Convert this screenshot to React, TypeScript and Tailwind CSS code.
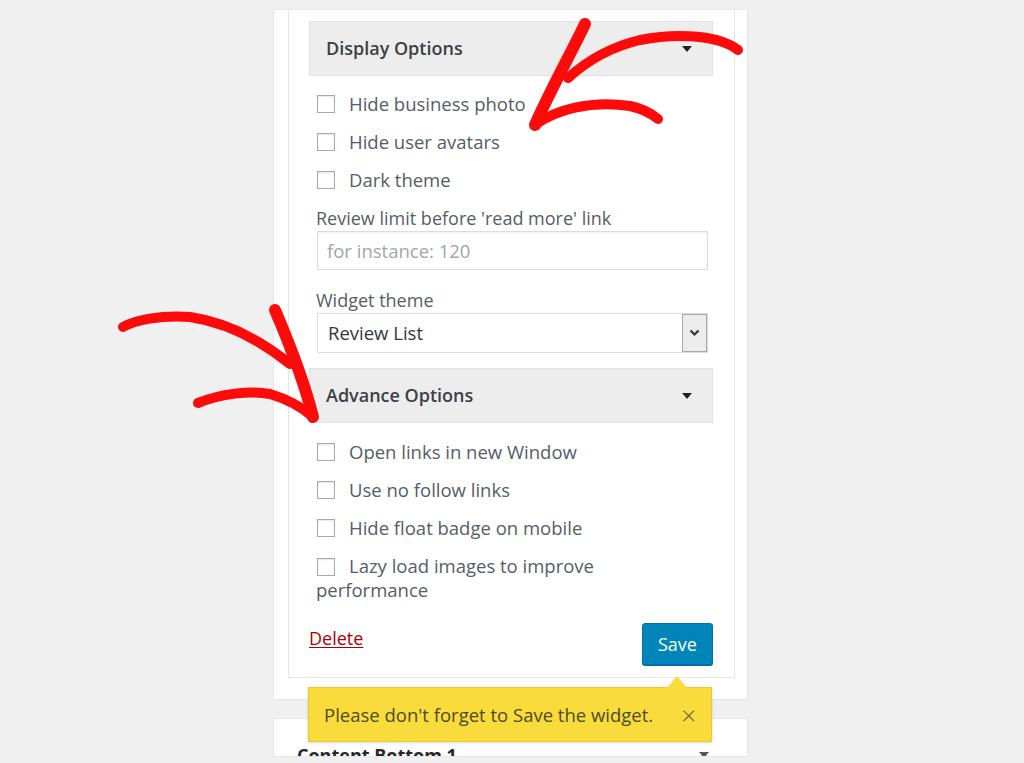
import React from "react";

function Checkbox() {
  return (
    <span className="inline-block w-[18px] h-[18px] shrink-0 border border-[#a7aaad] bg-white shadow-[inset_0_1px_2px_rgba(0,0,0,0.1)]" />
  );
}

function CheckRow({ label }: { label: string }) {
  return (
    <div className="h-[38px] flex items-center pl-[8px] gap-[14px]">
      <Checkbox />
      <span className="text-[18.5px] text-[#555d66] leading-[24px]">{label}</span>
    </div>
  );
}

function SectionHeader({ title }: { title: string }) {
  return (
    <div className="h-[55px] flex items-center justify-between bg-[#ededed] border border-[#e2e2e2] pl-[16px] pr-[20px]">
      <span className="text-[18px] font-semibold text-[#3c4045]">{title}</span>
      <span className="w-0 h-0 border-l-[5px] border-r-[5px] border-t-[6px] border-l-transparent border-r-transparent border-t-[#222]" />
    </div>
  );
}

export default function App() {
  return (
    <div className="relative w-[1024px] h-[763px] bg-[#f0f0f0] overflow-hidden font-['Open_Sans',sans-serif]">
      <div className="flex flex-col pl-[273px] pt-[9px]">
        {/* Outer panel */}
        <div className="w-[475px] bg-white border border-[#e6e6e6] pl-[14px] pr-[12px] pb-[21px]">
          <div className="border-x border-b border-[#e5e5e5] pl-[20px] pr-[21px] pt-[11px] pb-[12px]">
            <SectionHeader title="Display Options" />
            <div className="mt-[9px]">
              <CheckRow label="Hide business photo" />
              <CheckRow label="Hide user avatars" />
              <CheckRow label="Dark theme" />
            </div>
            <div className="mt-[8px] pl-[7px] h-[22px] leading-[22px] text-[18px] text-[#555d66]">
              Review limit before 'read more' link
            </div>
            <div className="mt-[2px] ml-[8px] mr-[5px] h-[39px] border border-[#dcdcdc] shadow-[inset_0_1px_2px_rgba(0,0,0,0.07)] flex items-center pl-[9px] text-[18.5px] text-[#a0a5aa]">
              for instance: 120
            </div>
            <div className="mt-[19px] pl-[7px] h-[22px] leading-[22px] text-[18px] text-[#555d66]">
              Widget theme
            </div>
            <div className="mt-[2px] ml-[8px] mr-[5px] h-[40px] border border-[#dcdcdc] flex items-stretch">
              <div className="flex-1 flex items-center pl-[10px] text-[18.5px] text-[#32373c]">Review List</div>
              <div className="w-[25px] border border-[#a9a9a9] bg-[#ececec] flex items-center justify-center">
                <svg width="11" height="8" viewBox="0 0 11 8">
                  <path d="M1.5 1.5 L5.5 5.5 L9.5 1.5" fill="none" stroke="#333" strokeWidth="2.2" />
                </svg>
              </div>
            </div>
            <div className="mt-[15px]">
              <SectionHeader title="Advance Options" />
            </div>
            <div className="mt-[10px]">
              <CheckRow label="Open links in new Window" />
              <CheckRow label="Use no follow links" />
              <CheckRow label="Hide float badge on mobile" />
            </div>
            <div className="mt-[7px] pl-[7px] text-[18.5px] leading-[24px] text-[#555d66] w-[310px]">
              <span className="inline-flex items-center align-middle ml-[1px] mr-[14px] -mt-[3px]">
                <Checkbox />
              </span>
              Lazy load images to improve performance
            </div>
            <div className="mt-[21px] flex justify-between items-start">
              <span className="mt-[4px] leading-[22px] text-[18px] text-[#a00] underline underline-offset-2">Delete</span>
              <button className="w-[71px] h-[42px] rounded-[3px] bg-[#0085ba] border border-[#0073aa] shadow-[0_1px_0_#006799] text-white text-[18px]">
                Save
              </button>
            </div>
          </div>
        </div>
        {/* Second panel */}
        <div className="mt-[18px] w-[475px] h-[39px] overflow-hidden bg-white border border-[#e6e6e6] pl-[23px] pr-[38px] pt-[24px] flex justify-between items-start">
          <span className="text-[18px] font-bold text-[#23282d] leading-[24px]">Content Bottom 1</span>
          <span className="mt-[9px] w-0 h-0 border-l-[5px] border-r-[5px] border-t-[6px] border-l-transparent border-r-transparent border-t-[#555]" />
        </div>
      </div>

      {/* Yellow notice tooltip */}
      <div className="absolute left-[308px] top-[687px] w-[404px] h-[55px] bg-[#f9dc3b] border border-[#e8c92f] shadow-[0_1px_3px_rgba(0,0,0,0.15)] flex items-center justify-between pl-[15px] pr-[15px]">
        <span className="text-[18.5px] text-[#4e4a1e]">Please don't forget to Save the widget.</span>
        <span className="text-[26px] font-light leading-none text-[#6b6530]">×</span>
      </div>
      <div className="absolute left-[667px] top-[676px] w-0 h-0 border-l-[10px] border-r-[10px] border-b-[12px] border-l-transparent border-r-transparent border-b-[#f9dc3b]" />

      {/* Red hand-drawn arrows */}
      <svg className="absolute inset-0 pointer-events-none" width="1024" height="763" viewBox="0 0 1024 763">
        <g fill="none" stroke="#ff0a0a" strokeLinecap="round" strokeLinejoin="round">
          <path d="M738 50 C720 36, 680 32, 640 40 C610 47, 588 60, 568 78" strokeWidth="10" />
          <path d="M585 24 C570 55, 548 95, 535 125" strokeWidth="12" />
          <path d="M535 125 C555 110, 590 100, 630 106 C645 109, 652 114, 658 119" strokeWidth="10" />
          <path d="M123 327 C135 320, 160 315, 190 317 C225 322, 260 340, 290 364" strokeWidth="10" />
          <path d="M275 310 C290 345, 305 385, 313 417" strokeWidth="12" />
          <path d="M198 403 C220 394, 250 390, 270 394 C290 400, 303 408, 313 417" strokeWidth="10" />
        </g>
      </svg>
    </div>
  );
}
